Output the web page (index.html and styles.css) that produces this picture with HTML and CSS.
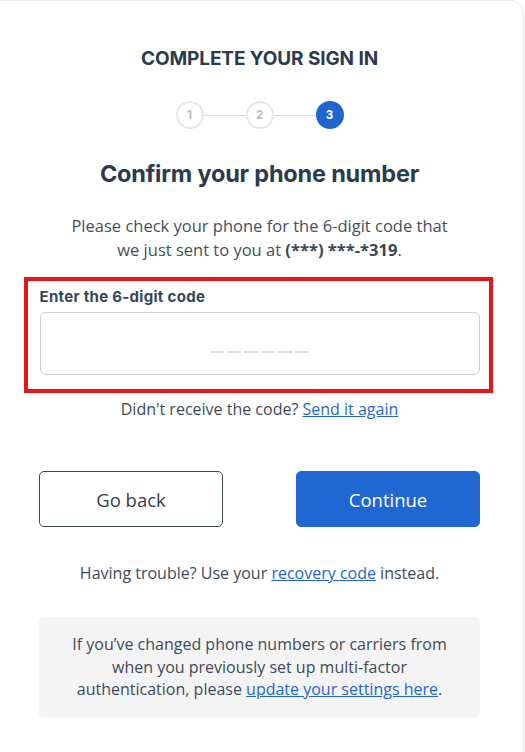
FILE: index.html
```html
<!DOCTYPE html>
<html>
<head>
<meta charset="utf-8">
<link rel="stylesheet" href="styles.css">
</head>
<body>
<div class="card">
  <h1 class="title">COMPLETE YOUR SIGN IN</h1>
  <div class="stepper">
    <span class="step">1</span>
    <span class="line"></span>
    <span class="step">2</span>
    <span class="line"></span>
    <span class="step active">3</span>
  </div>
  <h2 class="subtitle">Confirm your phone number</h2>
  <p class="desc">Please check your phone for the 6-digit code that<br>we just sent to you at <b>(***) ***-*319</b>.</p>
  <div class="highlight">
    <label class="label">Enter the 6-digit code</label>
    <div class="input">
      <span class="dashes"><i></i><i></i><i></i><i></i><i></i><i></i></span>
    </div>
  </div>
  <p class="resend">Didn't receive the code? <a href="#">Send it again</a></p>
  <div class="buttons">
    <button class="btn back">Go back</button>
    <button class="btn primary">Continue</button>
  </div>
  <p class="trouble">Having trouble? Use your <a href="#">recovery code</a> instead.</p>
  <div class="note">If you’ve changed phone numbers or carriers from<br>when you previously set up multi-factor<br>authentication, please <a href="#">update your settings here</a>.</div>
</div>
</body>
</html>
```
FILE: styles.css
```css
* { box-sizing: border-box; }
html, body { margin: 0; padding: 0; background: #fff; }
body { font-family: "Open Sans", "Liberation Sans", sans-serif; color: #3e4a58; }
.card {
  width: 524px;
  height: 752px;
  border-top: 1px solid #ececec;
  border-right: 1px solid #ececec;
  border-top-right-radius: 14px;
  display: flex;
  flex-direction: column;
  align-items: center;
  padding-top: 46px;
  padding-right: 4px;
}
.title {
  margin: 0;
  font-family: Inter, "DejaVu Sans", sans-serif;
  font-weight: 700;
  font-size: 19px;
  letter-spacing: -0.1px;
  color: #2b3b4e;
  line-height: 24px;
}
.stepper {
  display: flex;
  align-items: center;
  margin-top: 30px;
}
.step {
  width: 28px;
  height: 28px;
  border-radius: 50%;
  border: 2px solid #e8e8e8;
  display: flex;
  align-items: center;
  justify-content: center;
  font-family: Inter, sans-serif;
  font-weight: 700;
  font-size: 11.5px;
  color: #b9b9b9;
}
.step.active {
  background: #1f66d1;
  border-color: #1f66d1;
  color: #fff;
}
.line { width: 42px; height: 1px; background: #d6d6d6; }
.subtitle {
  margin: 30px 0 0;
  font-family: Inter, "DejaVu Sans", sans-serif;
  font-weight: 700;
  font-size: 23.5px;
  letter-spacing: -0.2px;
  line-height: 30px;
  color: #2b3b4e;
}
.desc {
  margin: 25px 0 0;
  text-align: center;
  font-size: 16.5px;
  font-weight: 500;
  line-height: 24px;
  color: #444f5c;
}
.desc b { font-weight: 700; color: #3a4654; }
.highlight {
  margin-top: 15px;
  width: 469px;
  margin-left: -3px;
  border: 4px solid #e8141c;
  padding: 6px 9px 14px 12px;
  display: flex;
  flex-direction: column;
}
.label {
  font-family: Inter, "DejaVu Sans", sans-serif;
  font-weight: 700;
  font-size: 15px;
  letter-spacing: 0.3px;
  color: #34465a;
  line-height: 20px;
}
.input {
  margin-top: 5px;
  height: 63px;
  border: 1px solid #cfcfcf;
  border-radius: 6px;
  display: flex;
  justify-content: center;
  align-items: flex-end;
  padding-bottom: 21px;
}
.dashes { display: flex; gap: 3px; }
.dashes i { display: block; width: 14px; height: 2px; background: #dedede; }
.resend, .trouble {
  margin: 0;
  font-size: 16px;
  font-weight: 500;
  line-height: 20px;
  color: #3e4a58;
}
.resend { margin-top: 6px; }
a { color: #1f66d1; text-decoration: underline; }
.buttons {
  margin-top: 52px;
  width: 441px;
  display: flex;
  justify-content: space-between;
}
.btn {
  width: 184px;
  height: 56px;
  border-radius: 5px;
  font-family: "Open Sans", sans-serif;
  font-size: 18.5px;
  font-weight: 500;
  cursor: pointer;
}
.btn.back { background: #fff; border: 1px solid #3f4b59; color: #333e4b; }
.btn.primary { background: #2167d1; border: 1px solid #2167d1; color: #fff; }
.trouble { margin-top: 36px; }
.note {
  margin-top: 34px;
  width: 441px;
  background: #f4f4f4;
  border-radius: 5px;
  padding: 16px 6px 17px;
  text-align: center;
  font-size: 16px;
  font-weight: 500;
  line-height: 22.5px;
  color: #3e4a58;
}
```
